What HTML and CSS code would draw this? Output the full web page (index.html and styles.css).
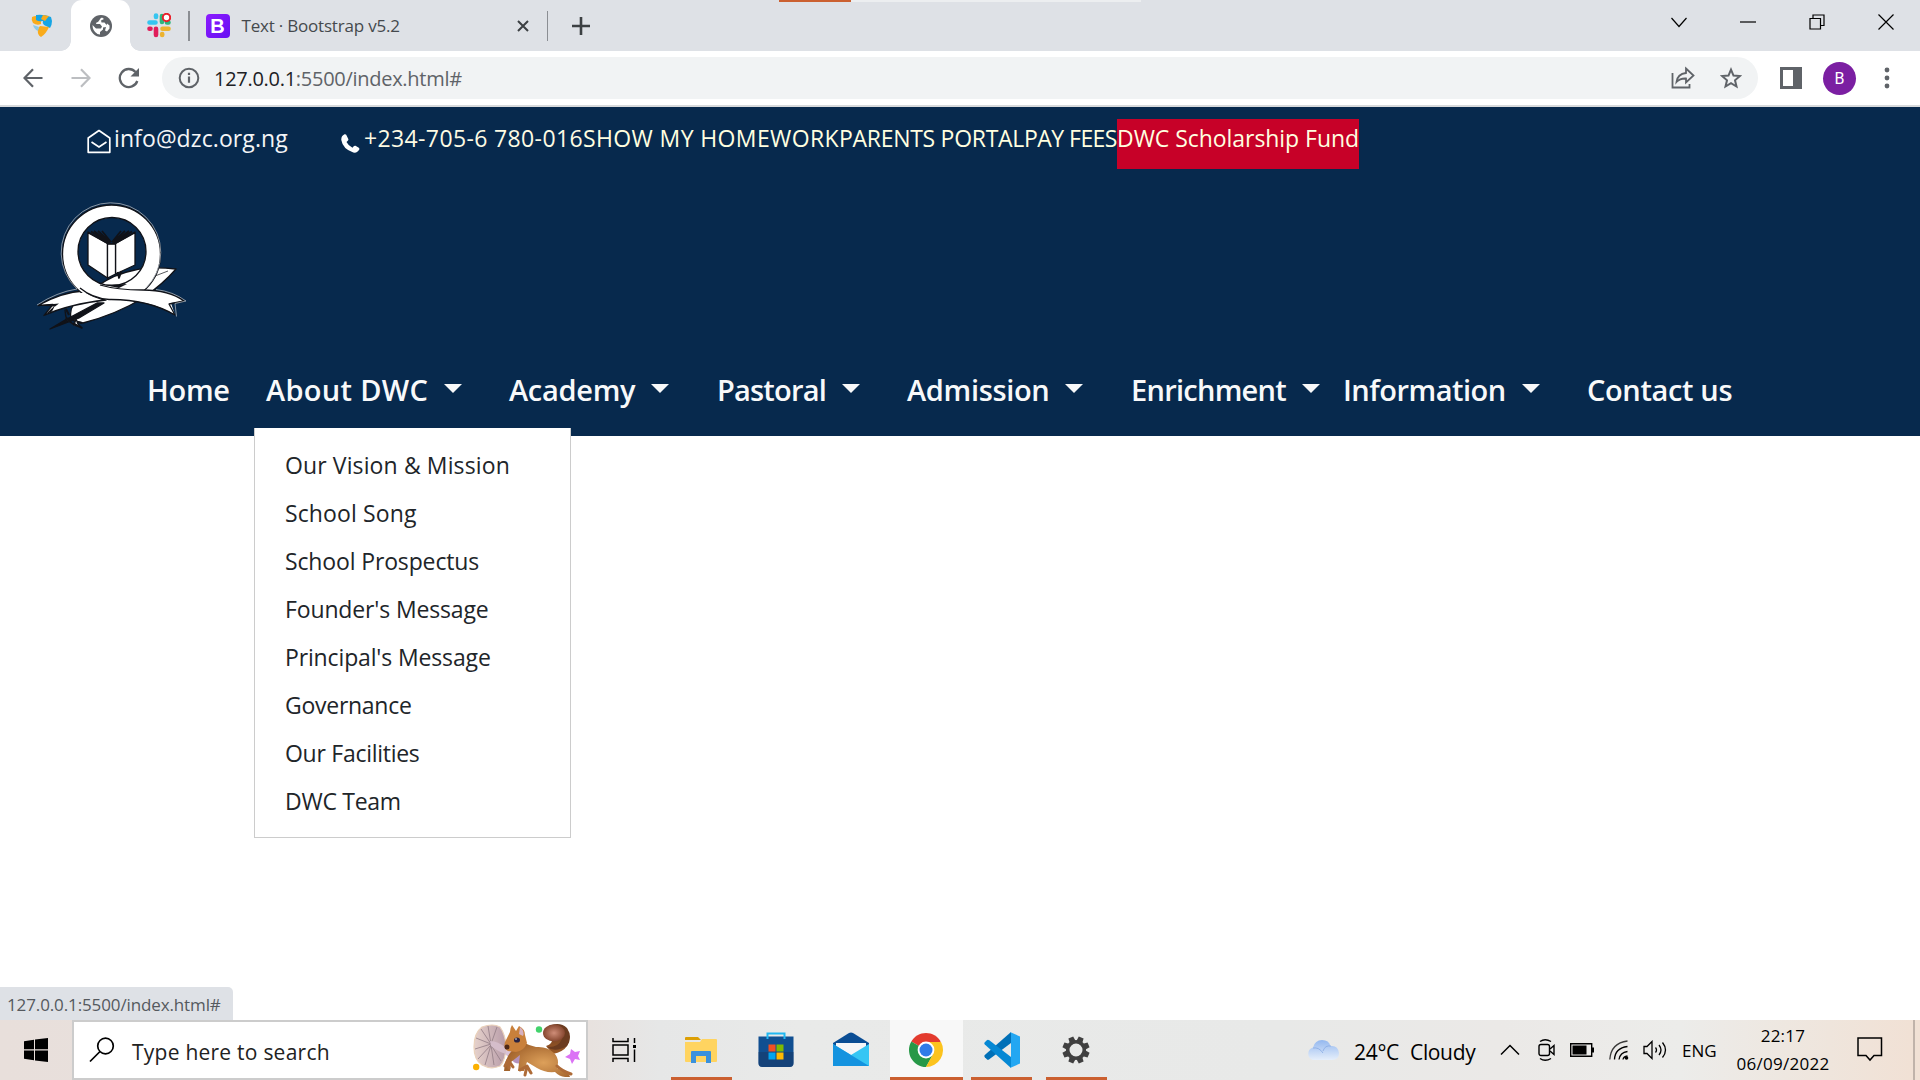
FILE: index.html
```html
<!DOCTYPE html>
<html lang="en">
<head>
<meta charset="utf-8">
<title>DWC</title>
<link rel="stylesheet" href="styles.css">
</head>
<body>
<div class="screen">
  <header class="tabstrip">
    <div class="top-accent"></div>
    <div class="tab-pinned"><svg width="22" height="24" viewBox="0 0 22 24"><path d="M1 3q4-2 9 0v7q-4 2-8-1-2-3-1-6z" fill="#f9ab1b"/><path d="M5 1q8-1 15 2l1 4q0 4-2 7l-6-3q-2-2-1-4-4 1-7-1z" fill="#16a5e4"/><path d="M12 1l6 1-4 5-4-2z" fill="#f9ab1b"/><path d="M9 12l9 1q-3 7-8 10-4-2-3-8z" fill="#f9ab1b"/><path d="M2 11l6 2-1 4q-4-2-5-6z" fill="#8cc9e8"/></svg></div>
    <div class="tab-active">
      <svg width="22" height="22" viewBox="0 0 22 22"><circle cx="11" cy="11" r="11" fill="#5f6368"/><path d="M12 2.500q-2 .5-2.500 2.500l-1.500 2q-2 0-2 2h4l2 2.500-1 2h-5l-3.500-3.500q0 6 5 9l2.500.5v-2.500l3-2.500v-2l3-.5.5-2-2-2.500h-3l-.5-2 3-1.500zM17 8.500l2.500 2v3l-2.500 3-2-1 1-3.500z" fill="#fff"/></svg>
    </div>
    <div class="tab-slack"><svg width="24" height="25" viewBox="0 0 24 25"><g stroke-width="4.600" stroke-linecap="round"><path d="M2.500 9.500h6M9 2.500v1.500" stroke="#36c5f0"/><path d="M15 3v6M20 9.500h1.500" stroke="#2eb67d"/><path d="M21.500 15.800h-6M15.200 22v-1" stroke="#ecb22e"/><path d="M9 22v-6.200M2.500 15.800h1" stroke="#e01e5a"/></g><circle cx="19.500" cy="4.500" r="3.700" fill="#fff" stroke="#e9202a" stroke-width="2"/></svg></div>
    <i class="tab-sep"></i>
    <div class="tab-bs">
      <span class="bs-icon">B</span>
      <span class="tab-title">Text · Bootstrap v5.2</span>
      <svg width="12" height="12" viewBox="0 0 12 12"><path d="M1 1l10 10M11 1L1 11" stroke="#3c4043" stroke-width="2"/></svg>
    </div>
    <i class="tab-sep"></i>
    <svg class="newtab" width="18" height="18" viewBox="0 0 18 18"><path d="M9 0v18M0 9h18" stroke="#3c4043" stroke-width="2.600"/></svg>
    <div class="winctl">
      <svg width="16" height="16" viewBox="0 0 16 16"><path d="M.5 4l7.500 8.500L15.500 4"/></svg>
      <svg width="16" height="16" viewBox="0 0 16 16"><path d="M0 8h16" stroke-width="1.500"/></svg>
      <svg width="16" height="16" viewBox="0 0 16 16"><path d="M1 4.500h10.500V15H1zM4 4.500V1h11v10.500h-3.500"/></svg>
      <svg width="16" height="16" viewBox="0 0 16 16"><path d="M.5.5l15 15M15.500.5l-15 15"/></svg>
    </div>
  </header>

  <div class="toolbar">
    <svg class="tb-back" width="20" height="20" viewBox="0 0 20 20"><path d="M19.500 10H2M10 1.200L1.500 10l8.500 8.800" fill="none" stroke="#5f6368" stroke-width="2.200"/></svg>
    <svg class="tb-fwd" width="20" height="20" viewBox="0 0 20 20"><path d="M.5 10H18M10 1.200l8.500 8.800-8.500 8.800" fill="none" stroke="#bcbec1" stroke-width="2.200"/></svg>
    <svg class="tb-reload" width="22" height="22" viewBox="0 0 22 22"><path d="M19.300 14A9 9 0 1 1 17.500 5" fill="none" stroke="#5f6368" stroke-width="2.300"/><path d="M21 1v8.500h-8.500z" fill="#5f6368"/></svg>
    <div class="omnibox">
      <svg class="info" width="22" height="22" viewBox="0 0 22 22"><circle cx="11" cy="11" r="9.300" fill="none" stroke="#5f6368" stroke-width="2"/><path d="M11 9.500v6.300M11 5.700v2.200" stroke="#5f6368" stroke-width="2.200"/></svg>
      <span class="url"><b>127.0.0.1</b>:5500/index.html#</span>
      <svg class="share" width="24" height="24" viewBox="0 0 24 24"><path d="M1.500 7v14.500h17V18" fill="none" stroke="#5f6368" stroke-width="1.800"/><path d="M15 2.500l7.500 7-7.500 7v-4q-6-.3-9.500 3.500Q6.500 8 15 7z" fill="none" stroke="#5f6368" stroke-width="1.800"/></svg>
      <svg class="star" width="22" height="22" viewBox="0 0 22 22"><path d="M11 2.600l2.500 6 6.400.5-4.900 4.200 1.500 6.200-5.500-3.300-5.500 3.300L7 13.300 2.100 9.100l6.400-.5z" fill="none" stroke="#5f6368" stroke-width="2"/></svg>
    </div>
    <svg class="panel" width="22" height="22" viewBox="0 0 22 22"><path d="M0 0h22v22H0zM3 3v16h10V3z" fill="#5f6368" fill-rule="evenodd"/></svg>
    <span class="avatar">B</span>
    <svg class="dots" width="6" height="22" viewBox="0 0 6 22"><g fill="#5f6368"><circle cx="3" cy="3" r="2.400"/><circle cx="3" cy="11" r="2.400"/><circle cx="3" cy="19" r="2.400"/></g></svg>
  </div>

  <main class="page">
    <div class="site-head">
      <div class="topbar">
        <svg class="mail" width="24" height="25" viewBox="0 0 24 25"><path d="M1.200 9L12 1.500 22.800 9v14.300H1.200z" fill="none" stroke="#fff" stroke-width="1.700" stroke-linejoin="round"/><path d="M4.500 13l7.500 5 7.500-5" fill="none" stroke="#fff" stroke-width="1.700"/></svg>
        <span class="t-mail">info@dzc.org.ng</span>
        <svg class="phone" width="19" height="19" viewBox="0 0 19 19"><path d="M3.500.3Q0 2 .3 6q1.500 9 12 12.500 4 .8 6-3 .3-1-.5-1.700l-3.300-2q-1-.4-1.800.4l-1.200 1.500Q7.500 12 5.500 8L7 6.500q.6-.6.300-1.500L5.200.8Q4.600-.1 3.500.3z" fill="#fff"/></svg>
        <span class="t-phone">+234-705-6 780-016</span>
        <span class="t-hw">SHOW MY HOMEWORK</span>
        <span class="t-pp">PARENTS PORTAL</span>
        <span class="t-fees">PAY FEES</span>
        <span class="t-fund">DWC Scholarship Fund</span>
      </div>
      <svg class="crest" width="152" height="132" viewBox="0 0 152 132">
        <g stroke="#101218" stroke-width="1.300" stroke-linejoin="round">
          <path d="M34 118Q32 104 40 100L62 83Q78 72 96 68.500 112 64 139 67Q126 82 106 96Q80 112 46 121Z" fill="#fff"/>
          <path d="M13 127L28 118 60 101 67 101 42 116Z" fill="#101218"/>
          <path d="M28 108l1 7 8 8 2-6 2 5 4 4-8-3-8-6z" fill="#fff"/>
          <path d="M29 107l3 6M36 121l9 5M40 120l5 1" fill="none" stroke-width="2"/>
          <path d="M118 74l13-5" fill="none" stroke-width=".7"/>
          <path d="M51 30l19.500 11.500v34.500L51 63zM98 30L78.500 41.500V72L98 63z" fill="#fff"/>
          <path d="M70.500 42h8v30l-8 4z" fill="#fff"/>
          <path d="M51 30.500l20 11h7l20-11M54 29.500l19 12M57 29l16 12M61 29l12 11M65 29l9 11M95 29.500l-19 12M92 29l-16 12M88 29l-12 11M84 29l-9 11" fill="none" stroke-width="1.700"/>
          <path d="M80.500 70l1.500 6 2.500-7" fill="none" stroke-width="1.800"/>
          <path d="M47 89Q25 90 1 103.500L16 102.500 7 113.500Q32 102 69 98Q57 96 47 89Z" fill="#fff"/>
          <path fill-rule="evenodd" d="M74.500 3a49 49 0 1 1 0 98 49 49 0 0 1 0-98zM75 15.500a34 34 0 1 0 0 68 34 34 0 0 0 0-68z" fill="#fff" clip-path="url(#ringClip)"/>
          <path d="M63 83q20 7 44 5 25 0 40 11L134 101l4 12Q110 96 72 98 52 95 43 85z" fill="#fff" stroke="none"/>
          <path d="M43 86Q55 96 72 97.500 110 97 138 113L132 102 147 99Q132 88 106 88 80 88 63 83" fill="none"/>
          <path d="M68 83l22-1-8 4z" fill="#101218" stroke="none"/>
          <path d="M1 103.500l21-2-4 3zM7 113.500l11-10-3 6z" fill="#101218" stroke="none"/>
        </g>
        <clipPath id="ringClip"><path d="M0 0h152v91H0z"/></clipPath>
        <path d="M109 86A49.800 49.800 0 1 0 40 87Q20 90 0 103M119 87.500q17 2 30 11.500l-11 2.500 1.500 13" fill="none" stroke="#aab0b8" stroke-width=".8"/>
      </svg>
      <nav class="mainnav">
        <div class="item"><span class="n-home">Home</span></div>
        <div class="item"><span class="n-about">About DWC</span><i class="caret"></i>
          <div class="menu">
            <a class="m-vision">Our Vision &amp; Mission</a>
            <a class="m-vision">School Song</a>
            <a class="m-message">School Prospectus</a>
            <a class="m-message">Founder's Message</a>
            <a class="m-message">Principal's Message</a>
            <a class="m-team">Governance</a>
            <a class="m-team">Our Facilities</a>
            <a class="m-team">DWC Team</a>
          </div>
        </div>
        <div class="item"><span class="n-academy">Academy</span><i class="caret"></i></div>
        <div class="item"><span class="n-pastoral">Pastoral</span><i class="caret"></i></div>
        <div class="item"><span class="n-admission">Admission</span><i class="caret"></i></div>
        <div class="item"><span class="n-enrich">Enrichment</span><i class="caret"></i></div>
        <div class="item"><span class="n-info">Information</span><i class="caret"></i></div>
        <div class="item"><span class="n-contact">Contact us</span></div>
      </nav>
    </div>
    <div class="status">127.0.0.1:5500/index.html#</div>
  </main>

  <footer class="taskbar">
    <div class="start"><svg width="24" height="24" viewBox="0 0 24 24"><path d="M0 3.200l10-1.400V11.300H0zM11 1.600L24 0v11.300H11zM0 12.500h10v9.700L0 20.800zM11 12.500h13V24l-13-1.600z"/></svg></div>
    <div class="search">
      <svg class="mag" width="26" height="26" viewBox="0 0 26 26"><circle cx="16.500" cy="9" r="7.800" fill="none" stroke="#000" stroke-width="1.700"/><path d="M11 14.500L1 24.500" stroke="#000" stroke-width="1.700"/></svg>
      <span class="t-search">Type here to search</span>
      <svg class="squirrel" width="108" height="54" viewBox="0 0 108 54">
        <defs>
          <linearGradient id="cap" x1="0" x2="1"><stop offset="0" stop-color="#e6d2cb"/><stop offset="1" stop-color="#b89ca9"/></linearGradient>
          <radialGradient id="fur" cx=".6" cy=".6" r=".6"><stop offset="0" stop-color="#dda05a"/><stop offset="1" stop-color="#a1622b"/></radialGradient>
          <linearGradient id="tail" x1="0" y1="0" x2="0" y2="1"><stop offset="0" stop-color="#6d3c25"/><stop offset="1" stop-color="#9c5b25"/></linearGradient>
          <radialGradient id="tip"><stop offset="0" stop-color="#cf8d78"/><stop offset="1" stop-color="#86472f"/></radialGradient>
        </defs>
        <path d="M30 20l22 8q4 5-1 10-6 3-10-1L26 28z" fill="#d9c3d8"/><ellipse cx="46" cy="36" rx="7" ry="4.500" fill="#b493bd"/>
        <path d="M9 4Q20 0 27 4q5 7 6 18 0 15-6 21-9 4-18-1Q1 37 1 24 1 10 9 4z" fill="url(#cap)" stroke="#ead1ba" stroke-width="1.200"/>
        <path d="M18 21L8 6M18 21L15 3M18 21l6-17M18 21L3 15M18 21L2 26M18 22L5 36M18 22l-6 20M18 22l3 20M18 22l10 16" stroke="#927c85" stroke-width=".8"/>
        <path d="M17 18q8 0 16 7v6q-9-3-15-8z" fill="#d5bdca"/>
        <path d="M73 23Q80 21 79 15L94 6q5 10 0 17-4 6-14 8z" fill="url(#tail)"/>
        <path d="M94 23Q100 14 94 5 88-1 78 2q12 4 11 14-4 9-15 8 8 6 20-1z" fill="#6c3c20"/>
        <ellipse cx="81" cy="10" rx="11" ry="8.500" fill="url(#tip)"/>
        <path d="M47 18q8 4 16 6 11-1 18 6 6 6 3 15l6 3q6 1 7 6-9 1-15-5-10 1-18-4l-10-6-3 9h-6l2-16-9 7-1 9h-6q1-12 6-18z" fill="url(#fur)"/>
        <path d="M32 19L37 9q0-4 2-7l4 6 3-5q6 3 6 9l2 8q-3 8-11 9l-8-1q-5-2-3-9z" fill="#c9803b"/>
        <path d="M47 4q5 4 3 9l-4-2z" fill="#d5b0c0"/>
        <ellipse cx="44" cy="17" rx="3" ry="2.600" fill="#292343"/><circle cx="43" cy="16" r=".8" fill="#fff"/><circle cx="34" cy="24" r="2.500" fill="#4d2717"/>
        <path d="M35 37l-3 6M35 38l1 7M36 38l4 6M54 43l-7 4M54 43l-2 9M54 43l4 7M84 43q5 5 14 8" fill="none" stroke="#ae6b37" stroke-width="3" stroke-linecap="round"/>
        <circle cx="66" cy="6.500" r="3.200" fill="#42d36c"/><circle cx="3.200" cy="44" r="3.200" fill="#fbb000"/><path d="M98 26l4 3 5-1-2 5 2 4-5-1-3 5-2-5-5-2 5-3z" fill="#db73f5"/>
      </svg>
    </div>
    <svg class="taskview" width="24" height="24" viewBox="0 0 24 24"><path d="M1 0v3.500h15V0M1 7h15v10H1zM1 24v-3.500h15V24M22.500 0v5M22.500 11.500V24" fill="none" stroke="#000" stroke-width="1.500"/><path d="M21 7h3v3h-3z"/></svg>
    <div class="app explorer"><svg width="34" height="36" viewBox="0 0 34 36"><path d="M1 6q0-1 1-1h12l3 3H1z" fill="#dc9f05"/><path d="M1 10h15l2-3h14q1 0 1 1v21q0 1-1 1H2q-1 0-1-1z" fill="#ffd460"/><path d="M7 31V20q0-1 1-1h18q1 0 1 1v11h-5v-7H12v7z" fill="#3a91dc"/></svg></div>
    <div class="app store"><svg width="36" height="36" viewBox="0 0 36 36"><path d="M.5 4.500h35V31q0 4-4 4h-27q-4 0-4-4z" fill="#104f91"/><path d="M.5 20h35v11q0 4-4 4h-27q-4 0-4-4z" fill="#173b69" opacity=".6"/><path d="M9.500 7V1.500h17V7" fill="none" stroke="#20b8f1" stroke-width="2"/><path d="M10.500 12.500h7v7h-7z" fill="#f25022"/><path d="M18.500 12.500h7v7h-7z" fill="#7fba00"/><path d="M10.500 20.500h7v7h-7z" fill="#00a4ef"/><path d="M18.500 20.500h7v7h-7z" fill="#ffb900"/></svg></div>
    <div class="app mailapp"><svg width="36" height="36" viewBox="0 0 36 36"><path d="M0 11L16 1q2-1.200 4 0l16 10v8H0z" fill="#0a4d94"/><path d="M3 11h30v8L18 27 3 19z" fill="#f5f6f8"/><path d="M0 12l18 11 18-11v22H0z" fill="#36c6f4"/><path d="M0 12l36 22H0z" fill="#1493df"/></svg></div>
    <div class="app chrome"><svg width="34" height="34" viewBox="0 0 34 34"><path d="M17 17L2.280 8.500A17 17 0 0 1 31.720 8.500z" fill="#e33b2e"/><path d="M17 17L2.280 8.500A17 17 0 0 0 17 34l8-14z" fill="#279847"/><path d="M17 9h15a17 17 0 0 1-15 25l7-13z" fill="#fcc31e"/><circle cx="17" cy="17" r="8.400" fill="#fff"/><circle cx="17" cy="17" r="6.500" fill="#2f7be8"/></svg></div>
    <div class="app vscode"><svg width="36" height="36" viewBox="0 0 36 36"><path d="M27 0L.8 23q-1 1 0 2.200l2 2q1 1 2.500 0L27 11z" fill="#0070b7"/><path d="M.8 12.500q-1-1 0-2.200l2-2q1-1 2.500 0L27 25v11z" fill="#0588d4"/><path d="M26 0l10 4.500v27L26 36q1-.5 1-2V2q0-1.500-1-2z" fill="#23a7f2"/></svg></div>
    <div class="app settings"><svg width="28" height="28" viewBox="-14 -14 28 28"><g fill="#404040"><path id="tooth" d="M-3.200-8l.6-5.600h5.200l.6 5.600z" transform="rotate(22.500)"/><use href="#tooth" transform="rotate(45)"/><use href="#tooth" transform="rotate(90)"/><use href="#tooth" transform="rotate(135)"/><use href="#tooth" transform="rotate(180)"/><use href="#tooth" transform="rotate(225)"/><use href="#tooth" transform="rotate(270)"/><use href="#tooth" transform="rotate(315)"/></g><circle r="8.300" fill="none" stroke="#404040" stroke-width="3.600"/></svg></div>
    <svg class="cloud" width="34" height="22" viewBox="0 0 34 22"><defs><linearGradient id="cl" x1="0" y1="0" x2="0" y2="1"><stop offset="0" stop-color="#94b8ef"/><stop offset="1" stop-color="#e6effb"/></linearGradient></defs><path d="M7 21a6.500 6.500 0 0 1 0-12.500Q9 1 16 1q7 0 8.500 6Q32 6 33 14q0 7-7 7z" fill="url(#cl)"/><path d="M7 9q6-1 10 5M17 12q2-6 8-5" fill="none" stroke="#86aae3" stroke-width=".8"/></svg>
    <span class="t-temp">24°C</span>
    <span class="t-cloudy">Cloudy</span>
    <svg class="up" width="20" height="12" viewBox="0 0 20 12"><path d="M1 10.500L10 1.500l9 9" fill="none" stroke="#000" stroke-width="1.500"/></svg>
    <svg class="cam" width="18" height="24" viewBox="0 0 18 24"><g fill="none" stroke="#000" stroke-width="1.400"><rect x="1" y="6.500" width="10.500" height="11" rx="2"/><path d="M12 11l4-3.500v9L12 13M2 3.500q5-3.500 11 0M2 20.500q5 3.500 11 0"/></g></svg>
    <svg class="batt" width="24" height="14" viewBox="0 0 24 14"><path d="M.7.700h21v12.600H.7z" fill="none" stroke="#000" stroke-width="1.400"/><path d="M2.500 2.500h14v9h-14zM22 4.500h2v5h-2z"/></svg>
    <svg class="wifi" width="20" height="20" viewBox="0 0 20 20"><g fill="none" stroke="#000" stroke-width="1.300"><path d="M.8 19.500Q2 3 18.500 1" stroke-opacity=".75"/><path d="M5.500 19.500Q6 8 18.500 6.500"/><path d="M10 19.500q1-7 8.500-8"/><path d="M14 19.500q.5-3 4.500-3.500"/></g><circle cx="17.500" cy="18" r="1.800"/></svg>
    <svg class="vol" width="24" height="20" viewBox="0 0 24 20"><g fill="none" stroke="#000" stroke-width="1.300"><path d="M1 6.500h3l5-5v17l-5-5H1z"/><path d="M12.500 7.500q2 2.500 0 5M16 5q4 5 0 10M19.500 2.500q6 7.500 0 15"/></g></svg>
    <span class="t-eng">ENG</span>
    <div class="clock"><span class="t-time">22:17</span><span class="t-date">06/09/2022</span></div>
    <svg class="notif" width="26" height="26" viewBox="0 0 26 26"><path d="M1 1h23.500v17.500H17l-4 4.500-4-4.500H1z" fill="none" stroke="#000" stroke-width="1.500"/></svg>
    <i class="peek"></i>
  </footer>
</div>
</body>
</html>
```
FILE: styles.css
```css
* { box-sizing: border-box; }
body { margin: 0; font-family: "Open Sans", "Noto Sans", sans-serif; background: #fff; }
svg { display: block; flex: none; }
span, a { white-space: nowrap; flex: none; }
.screen { width: 1920px; height: 1080px; display: flex; flex-direction: column; overflow: hidden; }

/* tab strip */
.tabstrip { position: relative; height: 51px; background: #dee1e6; display: flex; align-items: center; }
.top-accent { position: absolute; left: 779px; top: 0; width: 362px; height: 2px; background: linear-gradient(90deg, #cb6030 72px, #eceef0 72px); }
.tab-pinned { width: 71px; padding-left: 31px; }
.tab-active { position: relative; width: 59px; height: 51px; background: #fff; border-radius: 11px 11px 0 0; display: flex; align-items: center; justify-content: center; }
.tab-active::before, .tab-active::after { content: ""; position: absolute; bottom: 0; width: 10px; height: 10px; }
.tab-active::before { right: 100%; background: radial-gradient(circle at 0 0, transparent 9.5px, #fff 10px); }
.tab-active::after { left: 100%; background: radial-gradient(circle at 100% 0, transparent 9.5px, #fff 10px); }
.tab-slack { width: 58px; padding-left: 17px; }
.tab-sep { width: 1.5px; height: 30px; background: #8b8e93; }
.tab-bs { width: 357px; display: flex; align-items: center; padding-left: 16px; }
.bs-icon { width: 24px; height: 24px; border-radius: 4px; background: linear-gradient(135deg, #8c1bff, #6610f2); color: #fff; font: bold 20px/24px "Liberation Sans", sans-serif; text-align: center; }
.tab-title { font-size: 17px; letter-spacing: -.2px; color: #45494d; margin-left: 12px; width: 275px; }
.newtab { margin-left: 24px; }
.winctl { margin-left: auto; margin-right: 26px; margin-top: -8px; display: flex; gap: 53px; }
.winctl path { fill: none; stroke: #000; stroke-width: 1.2; }

/* toolbar */
.toolbar { height: 56px; border-bottom: 2px solid #d8dadc; display: flex; align-items: center; padding-left: 23px; }
.tb-fwd { margin-left: 28px; }
.tb-reload { margin-left: 27px; }
.omnibox { margin-left: 22px; width: 1596px; height: 42px; border-radius: 21px; background: #f1f3f4; display: flex; align-items: center; padding-left: 16px; }
.url { font-size: 20px; letter-spacing: -.28px; color: #5f6368; margin-left: 14px; width: 1457px; }
.url b { font-weight: 400; color: #202124; }
.star { margin-left: 25px; }
.panel { margin-left: 22px; }
.avatar { margin-left: 21px; width: 33px; height: 33px; border-radius: 50%; background: #7b1fa2; color: #fff; font: 16px/33px Roboto, sans-serif; text-align: center; }
.dots { margin-left: 28px; }

/* site */
.page { position: relative; height: 913px; }
.site-head { height: 329px; background: #07294d; display: flex; flex-direction: column; }
.topbar { height: 62px; padding: 12px 0 0 87px; display: flex; align-items: flex-start; font-size: 23px; line-height: 39px; color: #ffffe0; }
.mail { margin-top: 10px; }
.t-mail { margin-left: 3px; width: 227px; letter-spacing: .1px; color: #f4f5f7; }
.phone { margin-top: 15px; }
.t-phone { margin-left: 4px; width: 219px; letter-spacing: .37px; color: #fdfbe4; }
.t-hw { width: 256px; letter-spacing: .38px; }
.t-pp { width: 185px; letter-spacing: -.29px; }
.t-fees { width: 93px; letter-spacing: -.54px; }
.t-fund { width: 242px; height: 50px; letter-spacing: -.05px; background: #c70128; }
.crest { margin: 33px 0 0 37px; }
.mainnav { height: 102px; margin-top: 5px; padding-left: 147px; display: grid; grid-template-columns: 119px 243px 208px 190px 224px 212px 244px 200px; font-size: 29px; font-weight: 600; color: #f8f9fa; line-height: 40px; }
.item { position: relative; display: flex; align-items: flex-start; padding-top: 31px; }
.n-home { letter-spacing: -.3px; }
.n-about { letter-spacing: .3px; }
.n-academy { letter-spacing: -.3px; }
.n-pastoral { letter-spacing: -.8px; }
.n-admission { letter-spacing: -.33px; }
.n-enrich { letter-spacing: -.73px; }
.n-info { letter-spacing: -.5px; }
.n-contact { letter-spacing: -.36px; }
.caret { margin: 14px 0 0 16px; border: 9px solid transparent; border-top-color: #f8f9fa; border-bottom: 0; }
.menu { position: absolute; left: -12px; top: 89px; width: 317px; height: 410px; border: 1px solid #ccc; border-top: 0; background: #fff; padding: 13px 0 0 30px; font-size: 23px; font-weight: 400; line-height: 48px; color: #212529; display: flex; flex-direction: column; align-items: flex-start; }
.m-vision { letter-spacing: .12px; }
.m-message { letter-spacing: -.14px; }
.m-team { letter-spacing: -.27px; }
.status { position: absolute; left: 0; bottom: 0; width: 233px; height: 33px; background: #dee1e6; border-radius: 0 5px 0 0; padding-left: 7px; font-size: 17px; letter-spacing: -.12px; line-height: 35px; color: #55595e; }

/* taskbar */
.taskbar { position: relative; height: 60px; display: flex; align-items: center; color: #000; background: linear-gradient(90deg, #e8dfdb 0, #e8e2df 590px, #e6e7e7 660px, #e9eae9 800px, #e8e9e8 1280px, #ebe9e7 1500px, #ececea 1680px, #efe5dc 1830px, #f1e1d5 1910px); }
.start { width: 72px; padding-left: 24px; }
.search { width: 516px; height: 60px; background: #fff; border: 2px solid #ccc; display: flex; align-items: center; padding-left: 15px; }
.t-search { font-size: 21px; letter-spacing: .24px; margin-left: 17px; margin-top: 3px; width: 341px; color: #222; }
.taskview { margin-left: 24px; }
.app { position: relative; height: 60px; width: 61px; display: flex; align-items: center; justify-content: center; }
.explorer { margin-left: 35px; }
.explorer svg, .chrome svg, .settings svg { margin-right: 1px; }
.store { margin-left: 13px; }
.mailapp { margin-left: 14px; }
.chrome { margin-left: 9px; width: 73px; background: #f8f8f8; }
.vscode { margin-left: 8px; }
.settings { margin-left: 14px; }
.explorer::after, .chrome::after, .vscode::after, .settings::after { content: ""; position: absolute; left: 0; right: 0; bottom: 0; height: 3px; background: #cb6030; }
.cloud { margin-left: 199px; }
.t-temp { font-size: 21px; letter-spacing: -.3px; margin-left: 14px; width: 56px; margin-top: 3px; }
.t-cloudy { font-size: 21px; letter-spacing: -.35px; width: 90px; margin-top: 3px; }
.cam { margin-left: 18px; }
.batt { margin-left: 14px; }
.wifi { margin-left: 15px; }
.vol { margin-left: 14px; }
.t-eng { font-size: 17px; margin-left: 15px; width: 37px; }
.clock { width: 128px; display: flex; flex-direction: column; align-items: center; font-size: 17px; line-height: 28px; }
.t-time, .t-date { letter-spacing: .27px; }
.notif { margin-left: 10px; }
.peek { margin-left: 30px; width: 2px; height: 60px; background: #c0b3aa; }
```
